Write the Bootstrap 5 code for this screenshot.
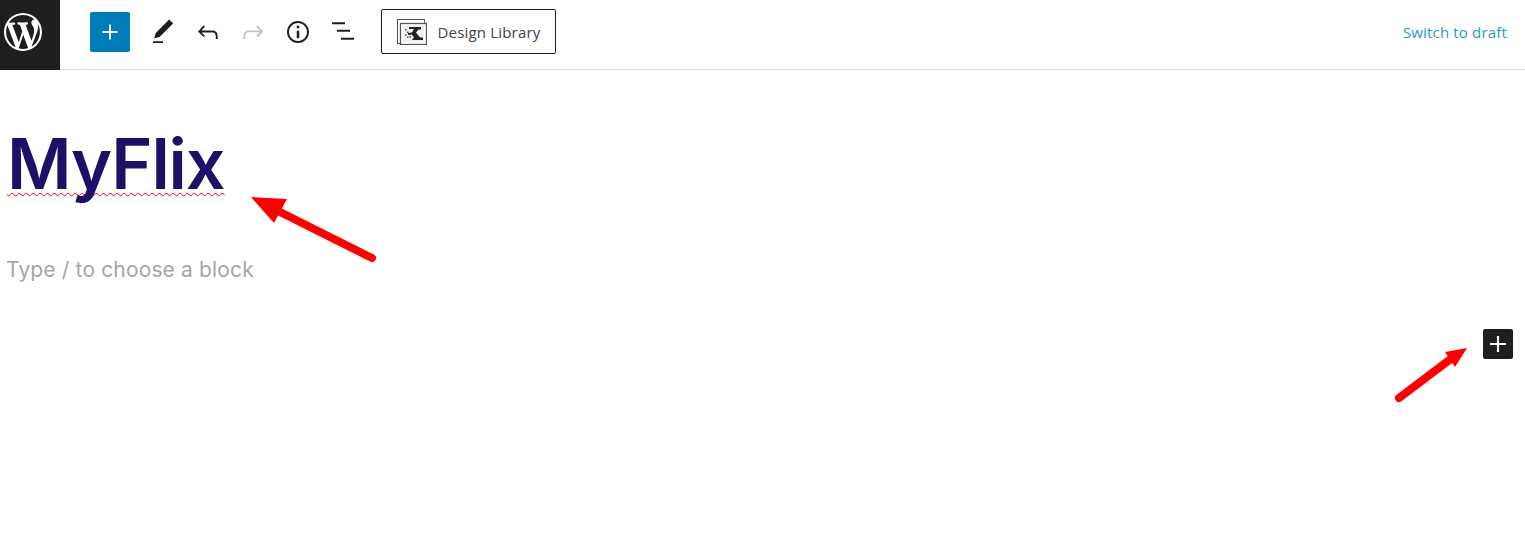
<!DOCTYPE html>
<html lang="en">
<head>
  <meta charset="UTF-8" />
  <meta name="viewport" content="width=device-width, initial-scale=1" />
  <title>MyFlix</title>
  <link href="https://cdn.jsdelivr.net/npm/bootstrap@5.3.0/dist/css/bootstrap.min.css" rel="stylesheet" />
  <script src="https://cdn.jsdelivr.net/npm/bootstrap@5.3.0/dist/js/bootstrap.bundle.min.js"></script>
  <style>
    html, body { height: 100%; overflow: hidden; }
    body { background: #fff; font-family: "Open Sans", sans-serif; position: relative; }

    .editor-bar { height: 70px; border-bottom: 1px solid #e0e0e0; }
    .wp-tile { width: 60px; height: 70px; background: #1e1e1e; padding-left: 4px; }
    .wp-tile svg { width: 38px; height: 38px; fill: #fff; margin-top: -5px; }

    .tool-row { margin-left: 30px; margin-top: -6px; }
    .add-btn { width: 40px; height: 40px; background: #007cba; border-radius: 2px; border: 0; padding: 0; }
    .add-btn svg { width: 30px; height: 30px; fill: #fff; }
    .tool-btn { width: 45px; height: 40px; border: 0; padding: 0; background: none; }
    .tool-btn svg { width: 30px; height: 30px; fill: #1e1e1e; }
    .tool-btn.is-off svg { fill: #c4c4c4; }
    .first-tool { margin-left: 10px; }

    .library-btn { width: 175px; height: 45px; margin-left: 16px; border: 1px solid #1e1e1e; border-radius: 2px; background: #fff; color: #3c434a; font-size: 15px; letter-spacing: .18px; padding: 1px 0 0; gap: 11px; }
    .switch-link { color: #2a97cf; font-size: 15px; letter-spacing: .17px; text-decoration: none; margin-right: 18px; margin-top: -4px; }

    .post-title { font-family: Inter, sans-serif; font-weight: 600; font-size: 70px; letter-spacing: -1.1px; line-height: 86px; color: #1f0f66; margin: 0; padding: 51px 0 0 7px; }
    .post-title span { text-decoration: underline wavy #f00 1px; text-decoration-skip-ink: none; text-underline-offset: 3px; }
    .block-hint { font-family: Inter, sans-serif; font-size: 21px; letter-spacing: .15px; line-height: 28px; color: #a6a6a6; margin: 0; padding: 49px 0 0 6px; }
    .side-row { padding-right: 12px; margin-top: 45px; }
    .side-add { width: 30px; height: 30px; background: #1e1e1e; border-radius: 2px; border: 0; padding: 0; }
    .side-add svg { width: 32px; height: 32px; fill: #fff; flex-shrink: 0; }

    .note-layer { position: absolute; left: 0; top: 0; pointer-events: none; }
  </style>
</head>
<body>

  <!-- top bar -->
  <header class="editor-bar d-flex align-items-center">
    <div class="wp-tile d-flex align-items-center flex-shrink-0">
      <svg viewBox="0 0 20 20"><path d="M20 10c0-5.51-4.49-10-10-10C4.48 0 0 4.49 0 10c0 5.52 4.48 10 10 10 5.51 0 10-4.48 10-10zM7.78 15.37L4.37 6.22c.55-.02 1.17-.08 1.17-.08.5-.06.44-1.13-.06-1.11 0 0-1.45.11-2.37.11-.18 0-.37 0-.58-.01C4.12 2.69 6.87 1.11 10 1.11c2.33 0 4.45.87 6.05 2.34-.68-.11-1.65.39-1.65 1.58 0 .74.45 1.36.9 2.1.35.61.55 1.36.55 2.46 0 1.49-1.4 5-1.4 5l-3.03-8.37c.54-.02.82-.17.82-.17.5-.05.44-1.25-.06-1.22 0 0-1.44.12-2.38.12-.87 0-2.33-.12-2.33-.12-.5-.03-.56 1.2-.06 1.22l.92.08 1.26 3.41zM17.41 10c.24-.64.74-1.87.43-4.25.7 1.29 1.05 2.71 1.05 4.25 0 3.29-1.73 6.24-4.4 7.78.97-2.59 1.94-5.2 2.92-7.78zM6.1 18.09C3.12 16.65 1.11 13.53 1.11 10c0-1.3.23-2.48.72-3.59C3.25 10.3 4.67 14.2 6.1 18.09zm4.03-6.63l2.58 6.98c-.86.29-1.76.45-2.71.45-.79 0-1.57-.11-2.29-.33.81-2.38 1.62-4.74 2.42-7.1z"/></svg>
    </div>

    <div class="tool-row d-flex align-items-center">
      <button class="add-btn d-flex align-items-center justify-content-center">
        <svg viewBox="0 0 24 24"><path d="M18 11.2h-5.2V6h-1.6v5.2H6v1.6h5.2V18h1.6v-5.2H18z"/></svg>
      </button>
      <button class="tool-btn first-tool d-flex align-items-center justify-content-center">
        <svg viewBox="0 0 24 24"><path d="M20.1 5.1L16.9 2 6.2 12.7l-1.3 4.4 4.5-1.3L20.1 5.1zM4 20.8h8v-1.5H4v1.5z"/></svg>
      </button>
      <button class="tool-btn d-flex align-items-center justify-content-center">
        <svg viewBox="0 0 24 24"><path d="M18.3 11.7c-.6-.6-1.4-.9-2.3-.9H6.7l2.9-3.3-1.1-1-4.5 5L8.5 16l1-1-2.7-2.7H16c.5 0 .9.2 1.3.5 1 1 1 3.4 1 4.5v.3h1.5v-.2c0-1.5 0-4.3-1.5-5.7z"/></svg>
      </button>
      <button class="tool-btn is-off d-flex align-items-center justify-content-center">
        <svg viewBox="0 0 24 24"><path d="M15.6 6.5l-1.1 1 2.9 3.3H8c-.9 0-1.7.3-2.3.9-1.4 1.5-1.4 4.2-1.4 5.6v.2h1.5v-.3c0-1.1 0-3.5 1-4.5.3-.3.7-.5 1.3-.5h9.2L14.5 15l1.1 1.1 4.6-4.6-4.6-5z"/></svg>
      </button>
      <button class="tool-btn d-flex align-items-center justify-content-center">
        <svg viewBox="0 0 24 24"><path d="M12 3.2c-4.8 0-8.8 3.9-8.8 8.8 0 4.8 3.9 8.8 8.8 8.8 4.8 0 8.8-3.9 8.8-8.8 0-4.8-4-8.8-8.8-8.8zm0 16c-4 0-7.2-3.3-7.2-7.2C4.8 8 8 4.8 12 4.8s7.2 3.3 7.2 7.2c0 4-3.2 7.2-7.2 7.2zM11 17h2v-6h-2v6zm0-8h2V7h-2v2z"/></svg>
      </button>
      <button class="tool-btn d-flex align-items-center justify-content-center">
        <svg viewBox="0 0 30 30"><path d="M4 5.300h13v2H4zM9 12.700h13v2H9zM13 20.700h13v2H13z"/></svg>
      </button>
      <button class="library-btn d-flex align-items-center justify-content-center">
        <svg width="30" height="26" viewBox="0 0 30 26">
          <rect x="0.500" y="0.500" width="27" height="24" fill="#fff" stroke="#555"/>
          <rect x="3.500" y="4.500" width="26" height="21" fill="#fff" stroke="#555" stroke-width="1.300"/>
          <rect x="6" y="7" width="21" height="16" fill="#f0f0f0"/>
          <path d="M12 8h12v2.500h-2.500l-2.500 3 4 5H26V21H15l2-2.500-2-3-4 .5v-2l4-.5 2-3.500h-5z" fill="#222"/>
          <path d="M8 10h1.500v1.500H8zM10 12.500h1.500V14H10zM8 15.500h1.500V17H8zM10 17.500h1.500V19H10zM12.500 17h1.500v1.500h-1.500z" fill="#555"/>
        </svg>
        <span>Design Library</span>
      </button>
    </div>

    <a href="#" class="switch-link ms-auto">Switch to draft</a>
  </header>

  <!-- editor canvas -->
  <main>
    <h1 class="post-title"><span>MyFlix</span></h1>
    <p class="block-hint">Type / to choose a block</p>
    <div class="side-row d-flex justify-content-end">
      <button class="side-add d-flex align-items-center justify-content-center">
        <svg viewBox="0 0 24 24"><path d="M18 11.2h-5.2V6h-1.6v5.2H6v1.6h5.2V18h1.6v-5.2H18z"/></svg>
      </button>
    </div>
  </main>

  <!-- red arrows drawn on top of the screenshot -->
  <svg class="note-layer" width="1525" height="557" viewBox="0 0 1525 557">
    <path d="M372 258L278 211" stroke="#f00" stroke-width="8" stroke-linecap="round" fill="none"/>
    <path d="M251 197L287 199L274 223z" fill="#f00"/>
    <path d="M1399 398L1452 358" stroke="#f00" stroke-width="8" stroke-linecap="round" fill="none"/>
    <path d="M1467 348L1445 352L1455 367z" fill="#f00"/>
  </svg>

</body>
</html>
